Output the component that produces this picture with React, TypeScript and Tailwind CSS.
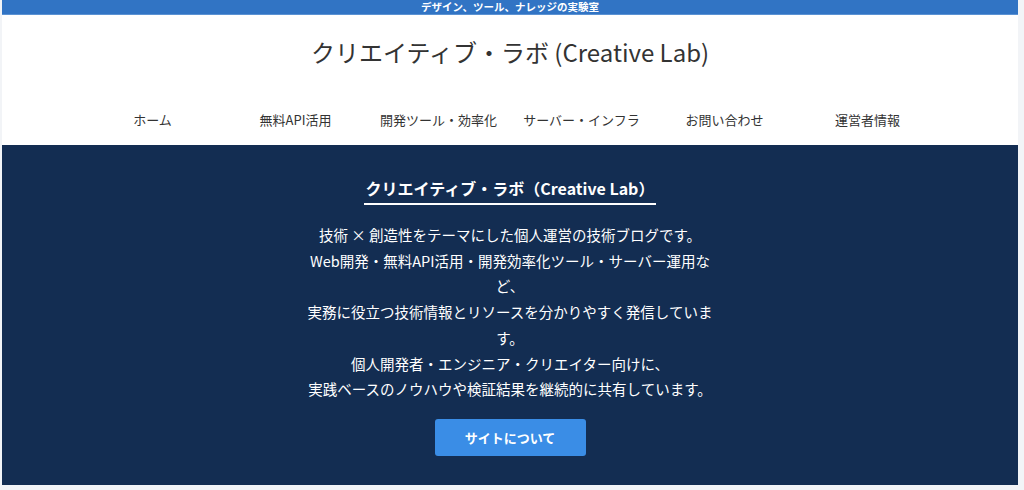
import React from "react";

const navItems = ["ホーム", "無料API活用", "開発ツール・効率化", "サーバー・インフラ", "お問い合わせ", "運営者情報"];

export default function App() {
  return (
    <div
      className="w-[1024px] h-[490px] bg-[#f2f4f7] overflow-hidden pl-[2px]"
      style={{ fontFamily: '"Noto Sans CJK JP", "Noto Sans", sans-serif' }}
    >
      <div className="w-[1016px] flex flex-col">
        <div className="h-[15px] bg-[#3174c4] border-b border-[#5b92d3] flex items-center justify-center">
          <span className="text-[10.5px] leading-none font-bold text-white">デザイン、ツール、ナレッジの実験室</span>
        </div>
        <header className="bg-white h-[130px] flex flex-col items-center">
          <h1 className="mt-[21px] text-[24px] leading-[32px] text-[#333] font-normal">
            クリエイティブ・ラボ (Creative Lab)
          </h1>
          <nav className="mt-[42px] w-[858px] grid grid-cols-6">
            {navItems.map((t) => (
              <a key={t} className="text-center text-[13px] leading-[20px] text-[#333]">
                {t}
              </a>
            ))}
          </nav>
        </header>
        <section className="bg-[#132d52] h-[340px] flex flex-col items-center">
          <h2 className="mt-[31px] text-white text-[16px] leading-[24px] font-bold px-[2px] pb-[3px] border-b-2 border-white">
            クリエイティブ・ラボ（Creative Lab）
          </h2>
          <p className="mt-[17px] w-[416px] text-center text-white text-[14.5px] leading-[25.7px]">
            技術 × 創造性をテーマにした個人運営の技術ブログです。
            <br />
            Web開発・無料API活用・開発効率化ツール・サーバー運用など、
            <br />
            実務に役立つ技術情報とリソースを分かりやすく発信しています。
            <br />
            個人開発者・エンジニア・クリエイター向けに、
            <br />
            実践ベースのノウハウや検証結果を継続的に共有しています。
          </p>
          <button className="mt-[17px] w-[151px] h-[37px] rounded-[3px] bg-[#3a8de6] text-white text-[13px] font-bold">
            サイトについて
          </button>
        </section>
      </div>
    </div>
  );
}
